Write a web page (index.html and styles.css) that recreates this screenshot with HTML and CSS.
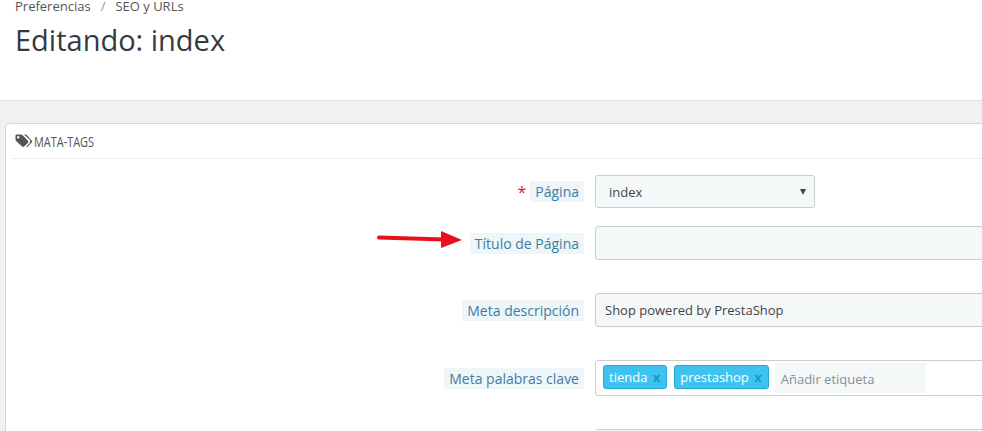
FILE: index.html
```html
<!DOCTYPE html>
<html lang="es">
<head>
    <meta charset="UTF-8">
    <title>Editando: index</title>
    <link rel="stylesheet" href="styles.css">
</head>
<body>
    <div class="page-head">
        <div class="breadcrumb">
            <span>Preferencias</span>
            <span class="crumb-sep">/</span>
            <span>SEO y URLs</span>
        </div>
        <h2 class="page-title">Editando: index</h2>
    </div>

    <div class="content">
        <div class="panel">
            <div class="panel-heading">
                <svg class="tag-icon" viewBox="0 0 17 14" width="17" height="14">
                    <path d="M0.5 1.8C0.5 1 1 .5 1.8 .5H6c.5 0 1 .2 1.4.6l5.6 5.6c.6.6.6 1.4 0 2l-3.9 3.9c-.6.6-1.4.6-2 0L1.100 7C.7 6.600.5 6.100.5 5.600ZM3.200 2.100a1.200 1.200 0 1 0 0 2.400 1.200 1.200 0 0 0 0-2.400Z" fill-rule="evenodd"/>
                    <path d="M9 .5h1.300c.5 0 1 .2 1.400.6l5 5.400c.6.6.6 1.400 0 2l-3.800 4c-.5.5-1.200.6-1.800.2l3.400-3.500c1-1 1-2.600 0-3.600Z"/>
                </svg>
                <span class="heading-text">MATA-TAGS</span>
            </div>

            <div class="form-row row-page">
                <div class="form-label"><span class="required">*</span><span class="label-text">Página</span></div>
                <div class="select-box">
                    <span>index</span>
                    <span class="caret"></span>
                </div>
            </div>

            <div class="form-row row-title">
                <div class="form-label"><span class="label-text">Título de Página</span></div>
                <div class="text-box"></div>
            </div>

            <div class="form-row row-desc">
                <div class="form-label"><span class="label-text">Meta descripción</span></div>
                <div class="text-box">Shop powered by PrestaShop</div>
            </div>

            <div class="form-row row-tags">
                <div class="form-label"><span class="label-text">Meta palabras clave</span></div>
                <div class="tags-box">
                    <span class="tag">tienda <b>x</b></span>
                    <span class="tag">prestashop <b>x</b></span>
                    <span class="tag-input">Añadir etiqueta</span>
                </div>
            </div>

            <div class="form-row">
                <div class="form-label"></div>
                <div class="text-box"></div>
            </div>
        </div>
    </div>

    <!-- red arrow painted over the screenshot -->
    <svg class="arrow" viewBox="0 0 90 20" width="90" height="20">
        <path d="M3 7.500 L68 9.500" stroke="#e8101a" stroke-width="4" stroke-linecap="round"/>
        <path d="M65 1 L86 10 L65 18 Z" fill="#e8101a"/>
    </svg>
</body>
</html>
```

FILE: styles.css
```css
* {
    box-sizing: border-box;
}

html, body {
    height: 431px;
    overflow: hidden;
}

body {
    margin: 0;
    font-family: "Open Sans", sans-serif;
    font-size: 13px;
    color: #363a41;
    background: #eff1f2;
}

.page-head {
    height: 101px;
    padding: 0 15px;
    background: #fff;
    border-bottom: 1px solid #dcdfe1;
}

.breadcrumb {
    display: flex;
    height: 13px;
    line-height: 13px;
    font-size: 13px;
    color: #555;
}

.crumb-sep {
    margin: 0 10px;
    color: #8c9c6c;
}

.page-title {
    margin: 5px 0 0;
    font-size: 29px;
    font-weight: 400;
    line-height: 44px;
    color: #363a41;
}

.content {
    padding: 22px 0 0 5px;
}

.panel {
    width: 1200px;
    height: 400px;
    padding: 0 10px 0 5px;
    background: #fff;
    border: 1px solid #d3d8db;
    border-radius: 5px;
}

.panel-heading {
    display: flex;
    align-items: center;
    gap: 2px;
    height: 35px;
    padding-left: 4px;
    color: #555;
    border-bottom: 1px solid #eee;
}

.heading-text {
    font-size: 14px;
    font-weight: 500;
    transform: scaleX(0.78);
    transform-origin: left center;
}

.tag-icon {
    fill: #555;
}

.form-row {
    display: flex;
    gap: 11px;
    margin-bottom: 33px;
}

.row-page {
    margin-top: 16px;
    margin-bottom: 18px;
}

.form-label {
    display: flex;
    align-items: center;
    justify-content: flex-end;
    gap: 4px;
    width: 573px;
    font-size: 14px;
    color: #3f7d9e;
}

.label-text {
    padding: 1px 5px 0 5px;
    line-height: 20px;
    background: #eef6fa;
}

.required {
    color: #e0212b;
    font-size: 16px;
}

.select-box,
.text-box {
    display: flex;
    align-items: center;
    height: 34px;
    padding: 0 9px;
    background: #f5f8f9;
    border: 1px solid #c9ced2;
    border-radius: 3px;
    color: #444;
}

.select-box {
    justify-content: space-between;
    width: 220px;
    height: 33px;
    padding: 1px 8px 0 13px;
}

.caret {
    width: 0;
    height: 0;
    border-left: 3px solid transparent;
    border-right: 3px solid transparent;
    border-top: 6px solid #444;
}

.text-box {
    flex: 1;
}

.tags-box {
    display: flex;
    align-items: center;
    flex: 1;
    gap: 7px;
    height: 36px;
    padding: 0 7px;
    background: #fff;
    border: 1px solid #c9ced2;
    border-radius: 3px;
}

.tag {
    height: 24px;
    margin-bottom: 2px;
    padding: 0 6px 0 5px;
    line-height: 22px;
    color: #fff;
    background: #3ec2f0;
    border: 1px solid #25a5d4;
    border-radius: 3px;
}

.tag b {
    margin-left: 2px;
    color: #1597c9;
}

.tag-input {
    align-self: stretch;
    flex: none;
    width: 151px;
    padding-left: 6px;
    margin: 2px 0 2px -1px;
    line-height: 32px;
    color: #8a8f93;
    background: #f5f8f9;
}

.arrow {
    position: absolute;
    left: 376px;
    top: 230px;
}
```
